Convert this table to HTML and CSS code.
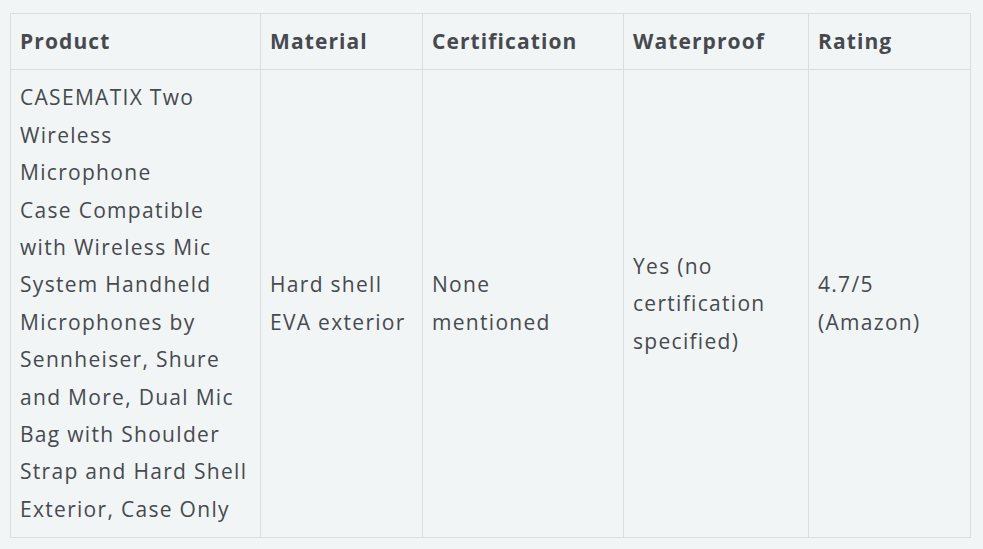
FILE: index.html
```html
<!DOCTYPE html>
<html>
<head>
<meta charset="utf-8">
<link rel="stylesheet" href="styles.css">
</head>
<body>
<table class="spec-table">
  <colgroup>
    <col class="c-product">
    <col class="c-material">
    <col class="c-cert">
    <col class="c-water">
    <col class="c-rating">
  </colgroup>
  <thead>
    <tr>
      <th>Product</th>
      <th>Material</th>
      <th>Certification</th>
      <th>Waterproof</th>
      <th>Rating</th>
    </tr>
  </thead>
  <tbody>
    <tr>
      <td>CASEMATIX Two Wireless<br>Microphone<br>Case Compatible with Wireless Mic System Handheld Microphones by Sennheiser, Shure and More, Dual Mic Bag with Shoulder Strap and Hard Shell Exterior, Case Only</td>
      <td>Hard shell EVA exterior</td>
      <td>None<br>mentioned</td>
      <td>Yes (no certification specified)</td>
      <td>4.7/5 (Amazon)</td>
    </tr>
  </tbody>
</table>
</body>
</html>
```
FILE: styles.css
```css
html, body {
  margin: 0;
  background: #f2f5f6;
}
body {
  padding: 13px 13px 0 10px;
  font-family: "Open Sans", "DejaVu Sans", sans-serif;
  color: #464a4f;
}
.spec-table {
  width: 960px;
  table-layout: fixed;
  border-collapse: collapse;
  border: 1px solid #dcdcdc;
}
.c-product { width: 250px; }
.c-material { width: 162px; }
.c-cert { width: 201px; }
.c-water { width: 185px; }
.c-rating { width: 162px; }
.spec-table th,
.spec-table td {
  border: 1px solid #dcdcdc;
  padding: 9px 8px 9px 9px;
  text-align: left;
  font-size: 21px;
  line-height: 37.4px;
  letter-spacing: 1.3px;
}
.spec-table th {
  font-weight: 700;
  letter-spacing: 1.1px;
  vertical-align: middle;
}
.spec-table td {
  font-weight: 400;
  vertical-align: middle;
}
```
